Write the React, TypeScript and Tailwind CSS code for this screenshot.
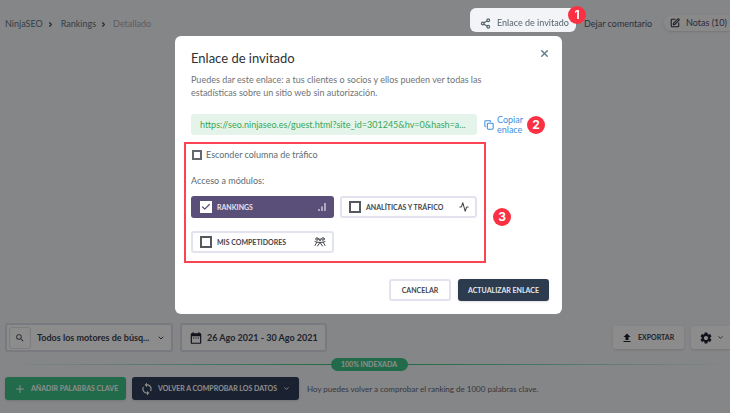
import React, { useState } from 'react';
import { Activity, ChevronDown, ChevronRight, Check, Copy, Plus, Share2, SquarePen, X } from 'lucide-react';
import { MdDateRange, MdFileUpload, MdSearch, MdSettings, MdSync } from 'react-icons/md';

const GUEST_URL = 'https://seo.ninjaseo.es/guest.html?site_id=301245&hv=0&hash=a...';

const BarsIcon = () => (
  <svg width="8" height="8" viewBox="0 0 8 8" fill="none" stroke="currentColor" strokeWidth="1.2">
    <path d="M1 8V6M4 8V3.5M7 8V0" />
  </svg>
);

const RivalsIcon = () => (
  <svg width="12" height="10" viewBox="0 0 24 20" fill="none" stroke="currentColor" strokeWidth="2" strokeLinecap="round" strokeLinejoin="round">
    <circle cx="6" cy="4" r="2.5" />
    <circle cx="18" cy="4" r="2.5" />
    <path d="M2 17l4-7 6 1 5 7M22 17l-4-7-6 1-5 7M2 9l3 1M22 9l-3 1M10 3l3 4M14 3l-3 4" />
  </svg>
);

const modules = [
  { id: 'rankings', label: 'RANKINGS', icon: <BarsIcon /> },
  { id: 'analytics', label: 'ANALÍTICAS Y TRÁFICO', icon: <Activity size={10} strokeWidth={2.5} /> },
  { id: 'rivals', label: 'MIS COMPETIDORES', icon: <RivalsIcon /> },
];

function Step({ children, className }: { children: React.ReactNode; className: string }) {
  return (
    <span className={`flex size-[18px] items-center justify-center rounded-full bg-[#fb3143] font-[Inter,sans-serif] text-[12px] font-bold text-white ${className}`}>
      {children}
    </span>
  );
}

function Header() {
  return (
    <header className="flex h-12 items-center justify-between overflow-hidden whitespace-nowrap pl-[5px] text-[9px] text-[#5f7482]">
      <nav className="flex items-center">
        <a href="#home">NinjaSEO</a>
        <ChevronRight size={7} strokeWidth={4} className="mx-1 text-[#40484f]" />
        <a href="#rankings" className="ml-[3px]">Rankings</a>
        <ChevronRight size={7} strokeWidth={4} className="mx-1 text-[#40484f]" />
        <span className="ml-[2px] text-[#a9adb3]">Detallado</span>
      </nav>

      <div className="flex items-center self-start pt-2">
        <div className="relative z-20">
          <button className="flex h-6 w-[106px] items-center gap-[6px] rounded-md bg-[#f3f4f8] pl-[10px] pt-[6px] text-[#55636c]">
            <Share2 size={11} strokeWidth={2.5} className="shrink-0" />
            Enlace de invitado
          </button>
          <Step className="absolute -right-[10px] -top-[2px]">1</Step>
        </div>
        <a href="#comment" className="ml-2 mr-[10px] w-[70px] pt-2 text-[#4f5a72]">Dejar comentario</a>
        <button className="mt-[6px] flex h-4 w-[66px] items-center gap-[6px] rounded-l-full bg-white/50 pl-[6px] text-[#4f4d72] shadow">
          <SquarePen size={10} strokeWidth={2.5} className="shrink-0 text-[#30303a]" />
          Notas (10)
        </button>
      </div>
    </header>
  );
}

function Toolbar() {
  return (
    <footer className="whitespace-nowrap pb-[13px] text-[#3b4150]">
      <div className="flex items-center justify-between overflow-hidden pb-1 pl-[5px]">
        <div className="flex gap-[7px]">
          <button className="flex h-[29px] w-[168px] items-center rounded-[3px] border-2 border-[#dcdeea] bg-white pl-[2px] text-[9px] font-bold">
            <span className="mr-[6px] flex size-[22px] items-center justify-center rounded-[3px] border border-[#e3e4ea]">
              <MdSearch size={10} />
            </span>
            Todos los motores de búsq...
            <ChevronDown size={8} strokeWidth={3} className="ml-auto mr-[6px]" />
          </button>
          <button className="flex h-[29px] w-[147px] items-center gap-1 rounded-[3px] border-2 border-[#dcdeea] bg-white pl-[7px] text-[9px] font-bold">
            <MdDateRange size={14} className="text-[#1f2230]" />
            26 Ago 2021 - 30 Ago 2021
          </button>
        </div>
        <div className="flex gap-[7px]">
          <button className="flex h-[23px] w-[71px] items-center gap-[5px] rounded-[3px] bg-white pl-[8px] text-[7px] font-bold shadow">
            <MdFileUpload size={12} className="text-[#1f2230]" />
            EXPORTAR
          </button>
          <button aria-label="Ajustes" className="flex h-[23px] w-[39px] items-center gap-1 rounded-l-[3px] bg-white pl-[8px] shadow">
            <MdSettings size={14} className="text-[#1f2230]" />
            <ChevronDown size={7} strokeWidth={3} />
          </button>
        </div>
      </div>

      <div className="flex items-center pb-[6px] pl-2 pt-[2px]">
        <div className="h-px flex-1 bg-linear-to-r from-transparent to-[#3ec387]" />
        <span className="flex h-[13px] w-[77px] items-center justify-center rounded-full bg-[#3ec387] text-[7px] font-bold text-white">100% INDEXADA</span>
        <div className="h-px flex-1 bg-linear-to-l from-transparent to-[#3ec387]" />
      </div>

      <div className="flex items-center gap-[6px] pl-[5px] text-[7px] font-bold text-white">
        <button className="flex h-[23px] w-[121px] items-center gap-[5px] rounded-[3px] bg-[#3ec387] pl-[9px] shadow">
          <Plus size={12} strokeWidth={2} />
          AÑADIR PALABRAS CLAVE
        </button>
        <button className="flex h-[23px] w-[167px] items-center gap-[4px] rounded-[3px] bg-[#303d58] pl-[8px] shadow">
          <MdSync size={14} />
          VOLVER A COMPROBAR LOS DATOS
          <ChevronDown size={7} strokeWidth={3} className="ml-auto mr-[9px]" />
        </button>
        <p className="ml-[2px] text-[8px] font-normal text-[#606675]">Hoy puedes volver a comprobar el ranking de 1000 palabras clave.</p>
      </div>
    </footer>
  );
}

export default function App() {
  const [active, setActive] = useState<string[]>(['rankings']);
  const [hideTraffic, setHideTraffic] = useState(false);

  const toggle = (id: string) => {
    setActive(active.includes(id) ? active.filter((m) => m !== id) : [...active, id]);
  };

  return (
    <div className="flex min-h-screen flex-col justify-between bg-[#f3f4f7] font-[Lato,sans-serif] leading-normal">
      <Header />
      <Toolbar />

      <div className="fixed inset-0 z-10 bg-black/45" />

      <div className="pointer-events-none fixed inset-0 z-30 flex items-start justify-center pl-[7px] pt-9">
        <div role="dialog" aria-labelledby="title" className="pointer-events-auto w-[387px] rounded-md bg-white px-[13px] pb-[13px] pt-3">
          <div className="flex items-start justify-between pl-[3px]">
            <h2 id="title" className="text-[13px] leading-[21px] text-[#2d3136]">Enlace de invitado</h2>
            <button aria-label="Cerrar" className="-mr-px text-[#607d8b]">
              <X size={11} strokeWidth={3} />
            </button>
          </div>
          <p className="w-[300px] pl-[3px] pt-1 text-[9px] leading-[13px] text-[#707376]">
            Puedes dar este enlace: a tus clientes o socios y ellos pueden ver todas las estadísticas sobre un sitio web sin autorización.
          </p>

          <div className="flex items-center pl-[3px] pt-[15px]">
            <input
              readOnly
              aria-label="Enlace"
              value={GUEST_URL}
              className="h-[21px] w-[286px] rounded-[3px] bg-[#e4f4ea] px-[9px] text-[9px] text-[#37a75a] outline-none"
            />
            <button className="ml-[7px] flex w-[42px] items-center gap-[3px] text-left text-[9px] leading-[10px] text-[#3f8fe0]">
              <Copy size={10} strokeWidth={2.5} className="shrink-0" />
              <span>Copiar enlace</span>
            </button>
            <Step className="ml-px">2</Step>
          </div>

          <div className="flex items-center gap-[7px] pt-[7px]">
            <div className="-ml-1 w-[302px] border-2 border-[#fb4453] pb-2 pl-[5px] pr-[7px] pt-[2px] text-[#5d6c73]">
              <label className="flex items-center gap-[4px] text-[9px] leading-[17px]">
                <input
                  type="checkbox"
                  checked={hideTraffic}
                  onChange={() => setHideTraffic(!hideTraffic)}
                  className="ml-px size-[10px] appearance-none border-2 border-[#63686d] checked:bg-[#5a4f78]"
                />
                Esconder columna de tráfico
              </label>
              <p className="pt-2 text-[9px] leading-5">Acceso a módulos:</p>
              <div className="grid grid-cols-[143px_137px] gap-x-[6px] gap-y-[13px] pt-[5px]">
                {modules.map((m) => {
                  const on = active.includes(m.id);
                  return (
                    <label
                      key={m.id}
                      className={`flex h-[22px] items-center rounded-[3px] border-2 pl-[7px] pr-[6px] text-[7px] font-bold ${on ? 'border-[#5a4f78] bg-[#5a4f78] text-[#e6e2f0]' : 'border-[#e2e3ee] bg-white text-[#3f454c]'}`}
                    >
                      <span className="mr-[5px] grid place-items-center">
                        <input
                          type="checkbox"
                          checked={on}
                          onChange={() => toggle(m.id)}
                          className="col-start-1 row-start-1 size-[12px] appearance-none border-2 border-[#55595e] checked:border-white checked:bg-white"
                        />
                        {on && <Check size={10} strokeWidth={3} className="pointer-events-none col-start-1 row-start-1 text-[#5a4f78]" />}
                      </span>
                      {m.label}
                      <span className="ml-auto">{m.icon}</span>
                    </label>
                  );
                })}
              </div>
            </div>
            <Step className="mt-7">3</Step>
          </div>

          <div className="flex justify-end gap-[7px] pt-4 text-[7px] font-bold">
            <button className="h-[22px] w-[62px] rounded-[3px] border-2 border-[#e2e3ee] bg-white text-[#3f454c]">CANCELAR</button>
            <button className="h-[22px] w-[91px] rounded-[3px] bg-[#2c3b4e] text-[#e5e9ee] shadow">ACTUALIZAR ENLACE</button>
          </div>
        </div>
      </div>
    </div>
  );
}
